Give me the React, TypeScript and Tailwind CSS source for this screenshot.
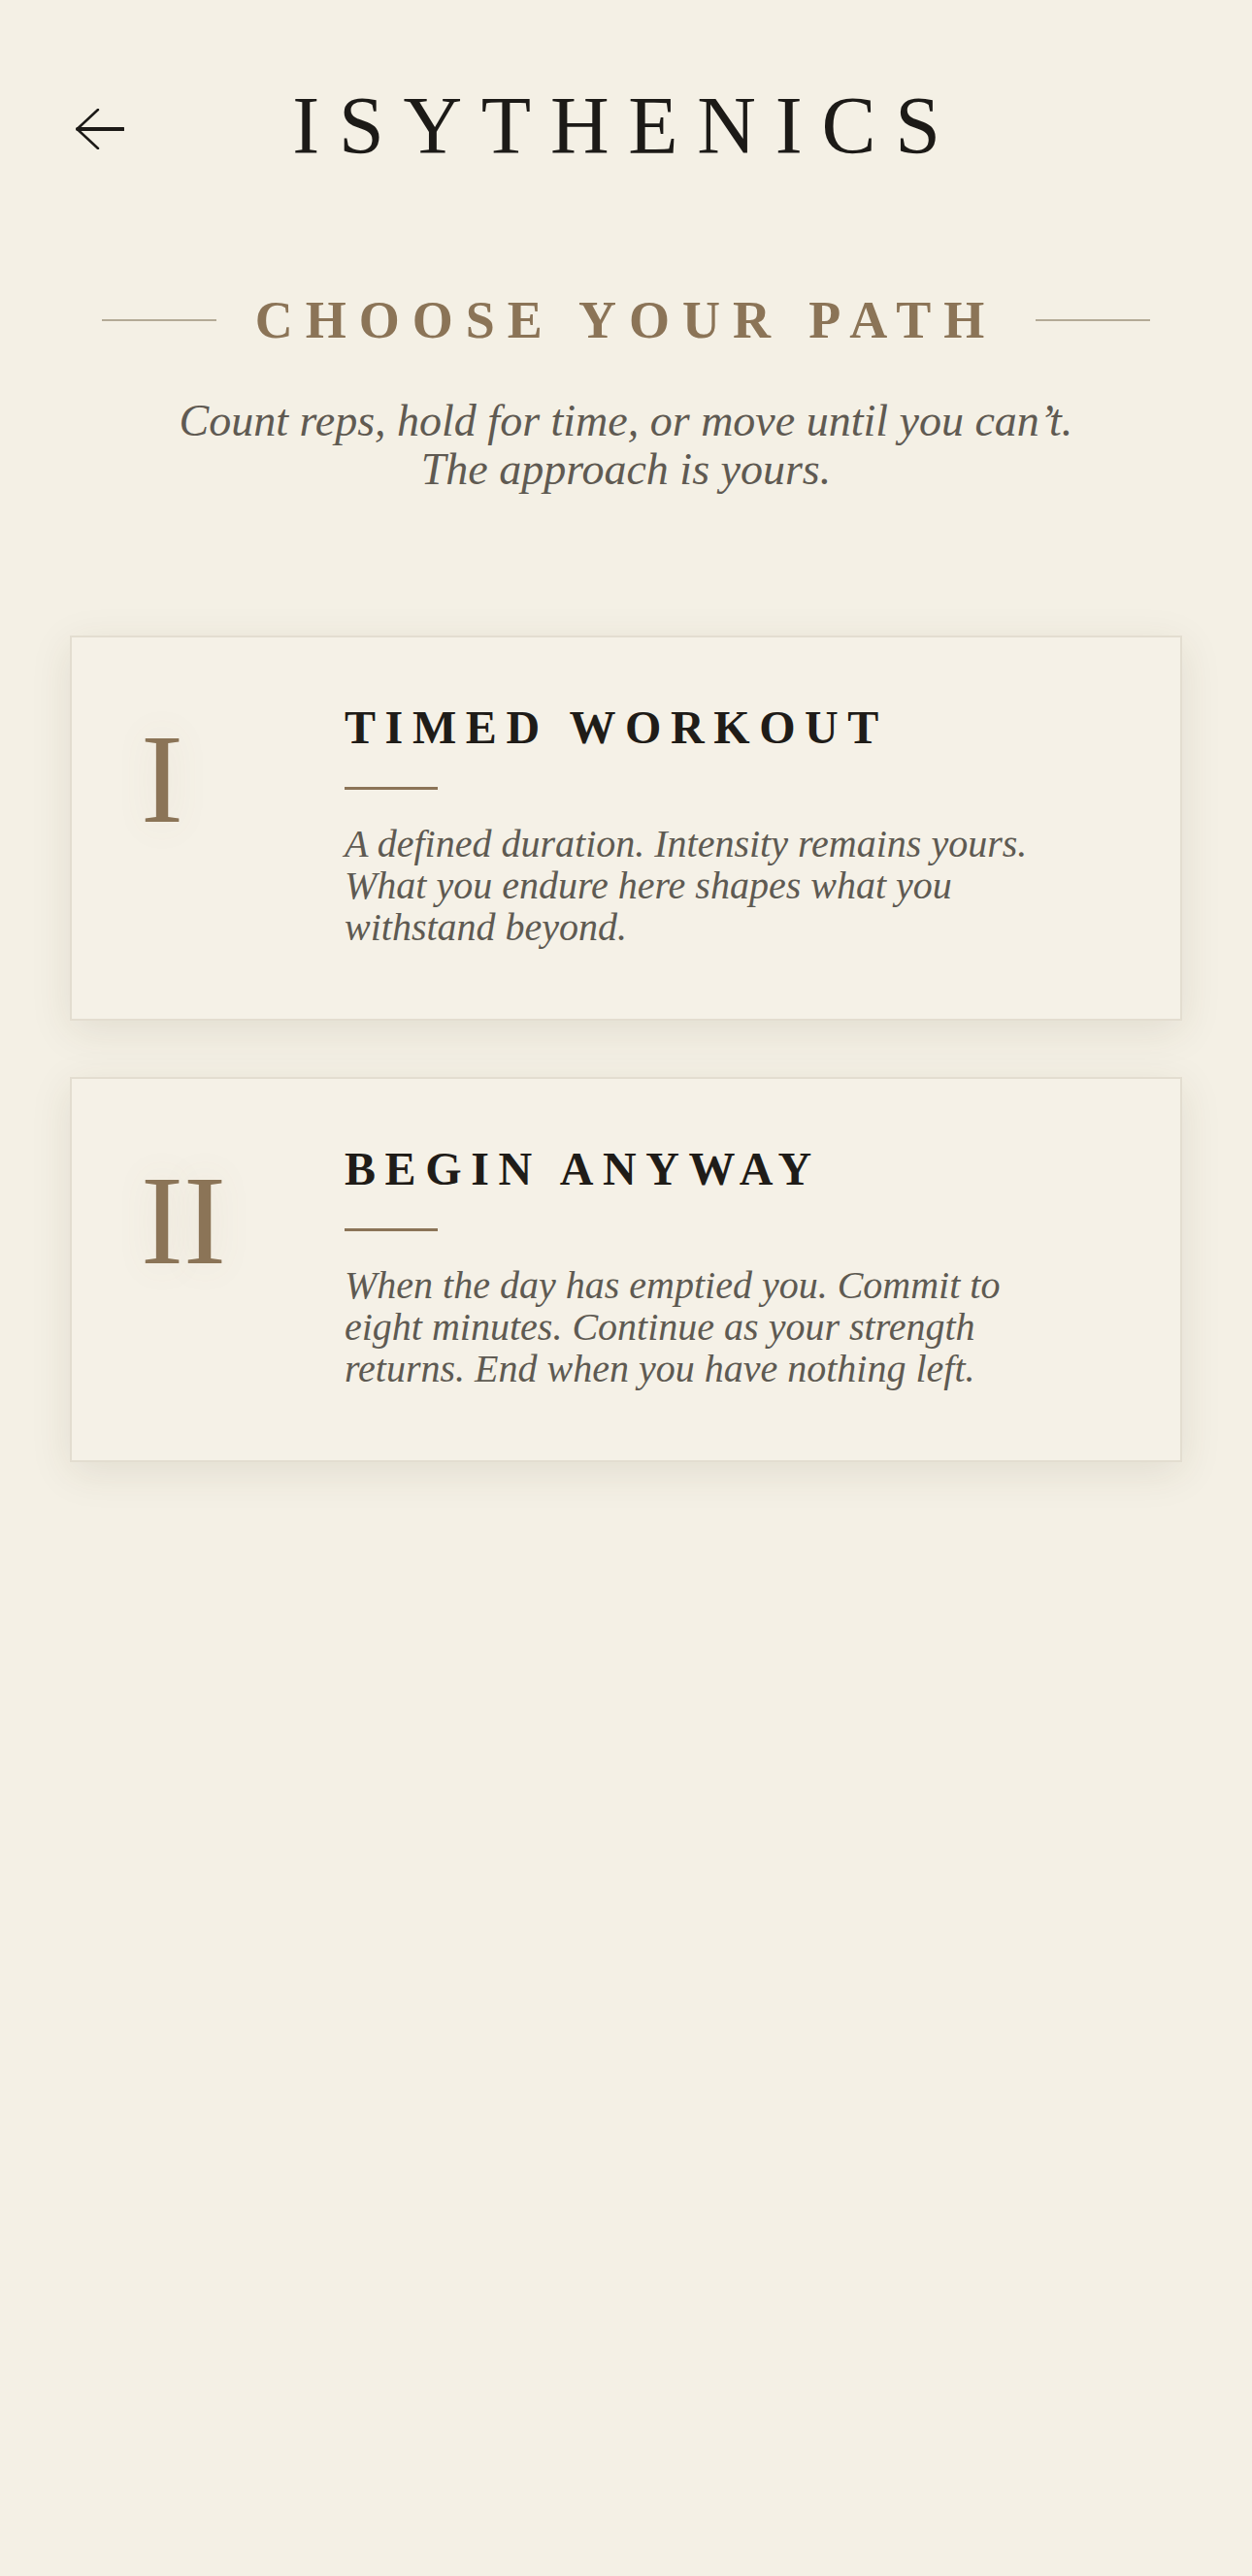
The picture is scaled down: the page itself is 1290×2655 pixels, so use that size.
const paths = [
  {
    numeral: "I",
    title: "TIMED WORKOUT",
    text: "A defined duration. Intensity remains yours. What you endure here shapes what you withstand beyond.",
  },
  {
    numeral: "II",
    title: "BEGIN ANYWAY",
    text: "When the day has emptied you. Commit to eight minutes. Continue as your strength returns. End when you have nothing left.",
  },
];

function BackArrow() {
  return (
    <svg width="50" height="42" viewBox="0 0 50 42" fill="none" className="mt-[6px]">
      <path d="M23 1 L1.5 21 L23 41" stroke="#1c1a17" strokeWidth="2.5" strokeLinecap="round" strokeLinejoin="round" />
      <path d="M2 21 H49" stroke="#1c1a17" strokeWidth="4" strokeLinecap="round" />
    </svg>
  );
}

export default function App() {
  return (
    <div className="min-h-[2655px] w-full bg-[#f4f0e5] font-['Liberation_Serif',serif] pt-[88px]">
      {/* Header */}
      <header className="grid grid-cols-[1fr_auto_1fr] items-center px-[78px]">
        <button className="justify-self-start">
          <BackArrow />
        </button>
        <h1 className="text-[84px] leading-none tracking-[0.235em] text-[#1c1a17]">
          ISYTHENICS
        </h1>
        <div />
      </header>

      {/* Section heading */}
      <div className="mt-[131px] flex items-center justify-center gap-[40px]">
        <span className="h-[2px] w-[118px] bg-[#b3aa96]" />
        <h2 className="text-[54px] leading-none font-bold tracking-[0.24em] text-[#8b7457]">
          CHOOSE YOUR PATH
        </h2>
        <span className="h-[2px] w-[118px] bg-[#b3aa96]" />
      </div>

      <p className="mt-[52px] text-center italic text-[46px] leading-[50px] text-[#5f5a52]">
        Count reps, hold for time, or move until you can’t.
        <br />
        The approach is yours.
      </p>

      {/* Path cards */}
      <div className="mt-[146px] px-[72px] flex flex-col gap-[58px]">
        {paths.map((p) => (
          <div
            key={p.title}
            className="flex items-start border-2 border-[#e3ddd0] bg-[#f5f1e7] pl-[71px] pr-[60px] pt-[69px] pb-[73px] shadow-[0_10px_40px_rgba(70,55,30,0.10)]"
          >
            <div className="w-[210px] shrink-0 mt-[11px] text-[132px] leading-none text-[#8b7457] [text-shadow:0_0_40px_rgba(139,116,87,0.12)]">
              {p.numeral}
            </div>
            <div className="flex flex-col">
              <h3 className="text-[48px] leading-none font-bold tracking-[0.2em] text-[#1f1c18]">
                {p.title}
              </h3>
              <span className="mt-[37px] h-[3px] w-[96px] bg-[#8b7457]" />
              <p className="mt-[34px] max-w-[730px] italic text-[40px] leading-[43px] text-[#5e5a52]">
                {p.text}
              </p>
            </div>
          </div>
        ))}
      </div>
    </div>
  );
}
